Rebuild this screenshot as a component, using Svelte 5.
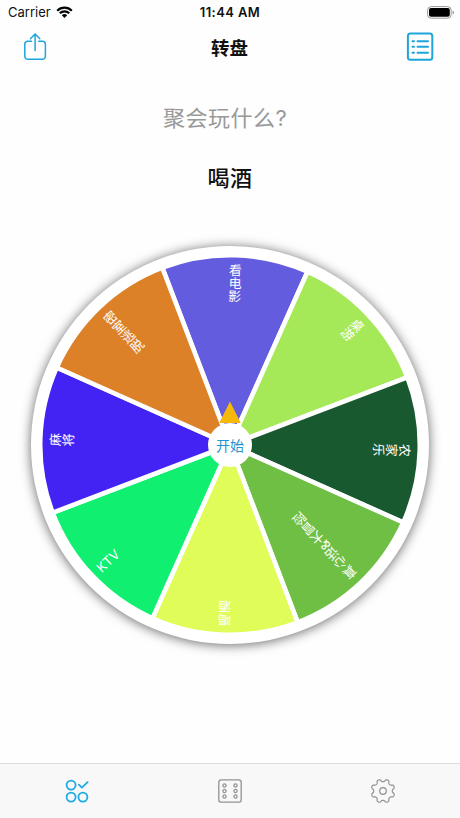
<script lang="ts">
  interface Slice {
    label: string;
    color: string;
  }

  const slices: Slice[] = [
    { label: '看电影', color: '#635cdf' },
    { label: '桌游', color: '#a5e958' },
    { label: '农家乐', color: '#195930' },
    { label: '真心话&大冒险', color: '#6fbf44' },
    { label: '喝酒', color: '#dffc58' },
    { label: 'KTV', color: '#10ef70' },
    { label: '麻将', color: '#4223f3' },
    { label: '密室逃脱', color: '#dc8128' },
  ];

  const radius = 189.8;
  const offset = 1.6;
  const step = 360 / slices.length;

  let tab = $state('wheel');

  function point(deg: number) {
    const a = (deg * Math.PI) / 180;
    return `${(radius * Math.sin(a)).toFixed(2)} ${(-radius * Math.cos(a)).toFixed(2)}`;
  }

  function wedge(i: number) {
    const mid = i * step + offset;
    return `M0 0L${point(mid - step / 2)}A${radius} ${radius} 0 0 1 ${point(mid + step / 2)}Z`;
  }

  // eight-toothed outline for the settings icon
  function gear() {
    const pts: string[] = [];
    for (let i = 0; i <= 160; i++) {
      const a = (i / 160) * Math.PI * 2;
      const r = 10.6 + 1.35 * Math.tanh(1.8 * Math.cos(8 * a + Math.PI));
      pts.push(`${(r * Math.sin(a)).toFixed(2)} ${(-r * Math.cos(a)).toFixed(2)}`);
    }
    return `M${pts.join('L')}Z`;
  }
</script>

<div class="screen">
  <div class="status">
    <div class="carrier">
      <span>Carrier</span>
      <svg width="17" height="13" viewBox="0 0 17 13">
        <path d="M1.2 4.7A10.2 10.2 0 0 1 15.8 4.7" />
        <path d="M3.8 7.3A6.6 6.6 0 0 1 13.2 7.3" />
        <path class="dot" d="M8.5 12L5.8 9.3A3.9 3.9 0 0 1 11.2 9.3Z" />
      </svg>
    </div>
    <div class="time">11:44 AM</div>
    <div class="battery">
      <svg width="28" height="13" viewBox="0 0 28 13">
        <rect x=".6" y=".6" width="23.6" height="11.6" rx="3.6" fill="none" stroke="#999" />
        <rect x="2" y="2" width="20.8" height="8.8" rx="2" />
        <path d="M25.6 4.5a2.1 2.1 0 0 1 0 4z" fill="#999" />
      </svg>
    </div>
  </div>

  <header class="nav">
    <button aria-label="Share">
      <svg width="24" height="30" viewBox="0 0 24 30">
        <path d="M8.5 9.3H4.8a3 3 0 0 0-3 3v12a3 3 0 0 0 3 3h14.6a3 3 0 0 0 3-3v-12a3 3 0 0 0-3-3h-3.700" />
        <path d="M12.1 18.500V2.300M7.400 6.700l4.700-4.700 4.700 4.700" />
      </svg>
    </button>
    <h1>转盘</h1>
    <button aria-label="List">
      <svg class="list" width="28" height="30" viewBox="0 0 28 30">
        <rect x="1.900" y="1.400" width="24.400" height="26.400" rx="2.500" />
        <path d="M6.500 9.200h1.500M11.500 9.200h10.500M6.500 14.700h1.500M11.500 14.700h10.500M6.500 20.700h1.500M11.500 20.700h10.500" />
      </svg>
    </button>
  </header>

  <main>
    <div class="question">聚会玩什么?</div>
    <div class="result">喝酒</div>

    <div class="wheel">
      <svg width="398" height="398" viewBox="-199 -199 398 398">
        {#each slices as slice, i}
          <path class="slice" d={wedge(i)} fill={slice.color} />
        {/each}
        {#each slices as slice, i}
          <text class="label" x="0" y="-181.3" transform="rotate({i * step + offset})">{slice.label}</text>
        {/each}
        <path d="M0-43.500L10.800-22H-10.800Z" fill="#f6b90b" />
        <circle r="22" fill="#fff" />
        <text class="start" x="0" y="5.500">开始</text>
      </svg>
    </div>
  </main>

  <nav class="tabs">
    <button class:active={tab === 'wheel'} aria-label="Wheel" onclick={() => (tab = 'wheel')}>
      <svg width="26" height="26" viewBox="-13 -13 26 26" stroke-width="1.800">
        <circle cx="-5.900" cy="-5.900" r="4.500" />
        <circle cx="-5.900" cy="6.100" r="4.500" />
        <circle cx="5.900" cy="6.100" r="4.500" />
        <path d="M1.900-6.400l3 3 5.700-5.500" />
      </svg>
    </button>
    <button class:active={tab === 'dice'} aria-label="Dice" onclick={() => (tab = 'dice')}>
      <svg width="26" height="26" viewBox="-13 -13 26 26" stroke-width="1.300">
        <rect x="-11.200" y="-11.200" width="22.400" height="22.400" rx="2.500" />
        {#each [-5.5, 0, 5.5] as y}
          <circle cx="-5.500" cy={y} r="1.600" />
          <circle cx="5.500" cy={y} r="1.600" />
        {/each}
      </svg>
    </button>
    <button class:active={tab === 'settings'} aria-label="Settings" onclick={() => (tab = 'settings')}>
      <svg width="26" height="26" viewBox="-13 -13 26 26" stroke-width="1.200">
        <path d={gear()} />
        <circle r="3.300" />
      </svg>
    </button>
  </nav>
</div>

<style>
  :global(body) {
    margin: 0;
    background: #fefefe;
  }

  .screen {
    display: flex;
    flex-direction: column;
    width: 460px;
    height: 818px;
    overflow: hidden;
    background: #fefefe;
    color: #111;
    font-family: Inter, 'Noto Sans CJK SC', sans-serif;
  }

  button {
    display: flex;
    align-items: center;
    justify-content: center;
    padding: 0;
    border: 0;
    background: none;
    color: #1da5dc;
  }

  .status {
    display: grid;
    grid-template-columns: 1fr auto 1fr;
    align-items: center;
    height: 24px;
    padding: 0 5px 0 8px;
    font-size: 13px;
  }

  .carrier {
    display: flex;
    align-items: center;
    gap: 5px;
  }

  .carrier path {
    fill: none;
    stroke: #000;
    stroke-width: 2.2;
  }

  .carrier .dot {
    fill: #000;
    stroke: none;
  }

  .time {
    margin-right: 3px;
    font-weight: 600;
    letter-spacing: 0.4px;
  }

  .battery {
    display: flex;
    justify-content: flex-end;
  }

  .nav {
    display: flex;
    align-items: center;
    justify-content: space-between;
    height: 46px;
    padding: 0 26px 0 23px;
  }

  .nav svg {
    fill: none;
    stroke: currentColor;
    stroke-width: 1.5;
    stroke-linecap: round;
    stroke-linejoin: round;
  }

  .nav .list {
    stroke-width: 2;
  }

  h1 {
    margin: 0;
    padding-left: 6px;
    font-size: 18.5px;
    font-weight: 600;
  }

  main {
    flex: 1;
    display: flex;
    flex-direction: column;
    align-items: center;
  }

  .question {
    margin-top: 31px;
    padding-right: 10px;
    line-height: 34px;
    font-size: 22px;
    letter-spacing: 0.5px;
    color: #999;
  }

  .result {
    margin-top: 26px;
    line-height: 34px;
    font-size: 22px;
    font-weight: 500;
    letter-spacing: 0.5px;
  }

  .wheel {
    width: 398px;
    height: 398px;
    margin-top: 51px;
    border-radius: 50%;
    background: #fff;
    box-shadow: 0 1px 12px rgba(0, 0, 0, 0.6);
  }

  .wheel svg {
    display: block;
  }

  .slice {
    stroke: #fff;
    stroke-width: 4.6;
  }

  .label {
    fill: #fff;
    font-size: 13px;
    font-weight: 400;
    writing-mode: vertical-rl;
  }

  .start {
    fill: #2394cf;
    font-size: 14px;
    text-anchor: middle;
  }

  .tabs {
    display: flex;
    justify-content: space-around;
    height: 54px;
    border-top: 1px solid #dcdcdc;
    background: #f8f8f8;
  }

  .tabs button {
    width: 153px;
    color: #929292;
  }

  .tabs button.active {
    color: #1dabe6;
  }

  .tabs svg {
    fill: none;
    stroke: currentColor;
    stroke-linecap: round;
    stroke-linejoin: round;
  }
</style>
